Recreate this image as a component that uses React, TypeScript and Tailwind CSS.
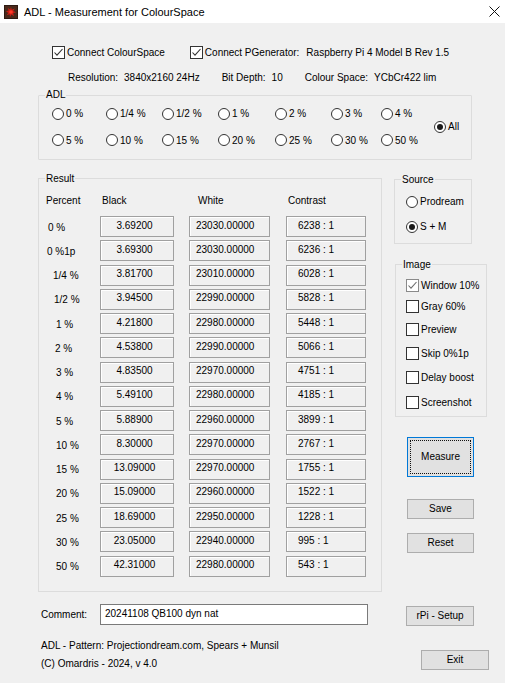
import React from "react";

const rows: { p: string; pad: string; b: string; w: string; c: string }[] = [
  { p: "0 %", pad: "pl-[2px]", b: "3.69200", w: "23030.00000", c: "6238 : 1" },
  { p: "0 %1p", pad: "pl-[1px]", b: "3.69300", w: "23030.00000", c: "6236 : 1" },
  { p: "1/4 %", pad: "pl-[7px]", b: "3.81700", w: "23010.00000", c: "6028 : 1" },
  { p: "1/2 %", pad: "pl-[8px]", b: "3.94500", w: "22990.00000", c: "5828 : 1" },
  { p: "1 %", pad: "pl-[10px]", b: "4.21800", w: "22980.00000", c: "5448 : 1" },
  { p: "2 %", pad: "pl-[9px]", b: "4.53800", w: "22990.00000", c: "5066 : 1" },
  { p: "3 %", pad: "pl-[10px]", b: "4.83500", w: "22970.00000", c: "4751 : 1" },
  { p: "4 %", pad: "pl-[10px]", b: "5.49100", w: "22980.00000", c: "4185 : 1" },
  { p: "5 %", pad: "pl-[10px]", b: "5.88900", w: "22960.00000", c: "3899 : 1" },
  { p: "10 %", pad: "pl-[10px]", b: "8.30000", w: "22970.00000", c: "2767 : 1" },
  { p: "15 %", pad: "pl-[10px]", b: "13.09000", w: "22970.00000", c: "1755 : 1" },
  { p: "20 %", pad: "pl-[10px]", b: "15.09000", w: "22960.00000", c: "1522 : 1" },
  { p: "25 %", pad: "pl-[10px]", b: "18.69000", w: "22950.00000", c: "1228 : 1" },
  { p: "30 %", pad: "pl-[10px]", b: "23.05000", w: "22940.00000", c: "995 : 1" },
  { p: "50 %", pad: "pl-[10px]", b: "42.31000", w: "22980.00000", c: "543 : 1" },
];

const adlRow1 = ["0 %", "1/4 %", "1/2 %", "1 %", "2 %", "3 %", "4 %"];
const adlRow2 = ["5 %", "10 %", "15 %", "20 %", "25 %", "30 %", "50 %"];

function Radio({ checked = false, label }: { checked?: boolean; label: string }) {
  return (
    <div className="flex items-center h-[13px] gap-[2px] whitespace-nowrap">
      <span className="w-[12px] h-[12px] shrink-0 rounded-full border border-[#333333] bg-white flex items-center justify-center">
        {checked && <span className="w-[6px] h-[6px] rounded-full bg-[#1a1a1a]" />}
      </span>
      <span className="leading-[13px]">{label}</span>
    </div>
  );
}

function Check({ checked = false, label, dim = false }: { checked?: boolean; label: string; dim?: boolean }) {
  return (
    <div className="flex items-center h-[13px] gap-[2px] whitespace-nowrap">
      <span
        className={
          dim
            ? "w-[13px] h-[13px] shrink-0 border border-[#8a8a8a] bg-white flex items-center justify-center"
            : "w-[13px] h-[13px] shrink-0 border border-[#333333] bg-white flex items-center justify-center"
        }
      >
        {checked && (
          <svg width="11" height="11" viewBox="0 0 11 11">
            <polyline
              points="1.5,5.5 4,8.2 9.5,2"
              fill="none"
              stroke={dim ? "#6e6e6e" : "#333333"}
              strokeWidth="1.1"
            />
          </svg>
        )}
      </span>
      <span className="leading-[13px]">{label}</span>
    </div>
  );
}

function Legend({ children }: { children: React.ReactNode }) {
  return <legend className="ml-[6px] px-[1px] leading-[12px]">{children}</legend>;
}

const boxCls =
  "h-[21px] border border-[#a0a0a0] shadow-[inset_1px_1px_0_#ffffff] flex items-center leading-[12px] pb-[2px]";

export default function App() {
  return (
    <div className="w-[505px] h-[683px] bg-[#f0f0f0] overflow-hidden font-['Liberation_Sans',Arial,sans-serif] text-[10px] text-black">
      {/* Title bar */}
      <div className="h-[23px] bg-white flex items-center pl-[4px] pr-[5px]">
        <svg width="14" height="14" viewBox="0 0 14 14" className="shrink-0">
          <rect x="0" y="0" width="14" height="14" fill="#2e1a12" />
          <rect x="1" y="1" width="12" height="12" fill="#4a2a1c" />
          <polygon
            points="7,2 7.8,4.8 10.8,3.4 9.2,6 12,7.3 9.2,8.3 10,11.2 7.4,9.6 6,12 5.6,9.3 2.6,10.2 4.3,7.9 2,6.2 4.6,5.6 3.8,3 6.1,4.4"
            fill="#c81e14"
          />
          <circle cx="7" cy="7" r="1.8" fill="#ff3a28" />
        </svg>
        <span className="ml-[6px] text-[11px] leading-[14px] text-[#000000]">
          ADL - Measurement for ColourSpace
        </span>
        <div className="flex-1" />
        <svg width="11" height="11" viewBox="0 0 11 11" className="mb-[1px]">
          <line x1="0.5" y1="0.5" x2="10.5" y2="10.5" stroke="#111" strokeWidth="1" />
          <line x1="10.5" y1="0.5" x2="0.5" y2="10.5" stroke="#111" strokeWidth="1" />
        </svg>
      </div>

      {/* Connect row */}
      <div className="mt-[23px] pl-[52px] flex items-center h-[13px] leading-[13px]">
        <Check checked label="Connect ColourSpace" />
        <div className="ml-[25px]">
          <Check checked label="Connect PGenerator:" />
        </div>
        <span className="ml-[7px]">Raspberry Pi 4 Model B Rev 1.5</span>
      </div>

      {/* Resolution row */}
      <div className="mt-[12px] pl-[68px] flex items-center h-[14px] leading-[14px] whitespace-nowrap">
        <span>Resolution:</span>
        <span className="ml-[6px]">3840x2160 24Hz</span>
        <span className="ml-[22px]">Bit Depth:</span>
        <span className="ml-[6px]">10</span>
        <span className="ml-[22px]">Colour Space:</span>
        <span className="ml-[6px]">YCbCr422 lim</span>
      </div>

      {/* ADL group */}
      <fieldset className="ml-[38px] mt-[4px] w-[434px] border border-[#dcdcdc] rounded-[1px]">
        <Legend>ADL</Legend>
        <div className="flex items-center pl-[13px] pt-[6px] pb-[12px]">
          <div className="grid grid-cols-[54px_56px_56px_57px_56px_50px_53px] gap-y-[13.5px]">
            {adlRow1.map((l) => (
              <Radio key={l} label={l} />
            ))}
            {adlRow2.map((l) => (
              <Radio key={l} label={l} />
            ))}
          </div>
          <Radio checked label="All" />
        </div>
      </fieldset>

      {/* Middle section */}
      <div className="flex items-start mt-[13px]">
        {/* Result group */}
        <fieldset className="ml-[38px] w-[344px] border border-[#dcdcdc]">
          <Legend>Result</Legend>
          <div className="pl-[7px] pt-[9px] pb-[14px]">
            <div className="flex h-[14px] leading-[14px] whitespace-nowrap">
              <span className="w-[54px]">Percent</span>
              <span className="w-[89px] pl-[2px]">Black</span>
              <span className="w-[97px] pl-[9px]">White</span>
              <span className="pl-[2px]">Contrast</span>
            </div>
            <div className="mt-[8.5px] flex flex-col gap-[3.25px]">
              {rows.map((r) => (
                <div key={r.p} className="flex items-center h-[21px] whitespace-nowrap">
                  <span className={"w-[54px] pt-[2px] leading-[12px] " + r.pad}>{r.p}</span>
                  <div className={boxCls + " w-[74px] justify-center pr-[5px]"}>{r.b}</div>
                  <div className={boxCls + " ml-[15px] w-[81px] pl-[6px]"}>{r.w}</div>
                  <div className={boxCls + " ml-[16px] w-[80px] pl-[11px]"}>{r.c}</div>
                </div>
              ))}
            </div>
          </div>
        </fieldset>

        {/* Right column */}
        <div className="flex flex-col mt-[1px]">
          <fieldset className="ml-[12px] w-[78px] border border-[#dcdcdc]">
            <Legend>Source</Legend>
            <div className="pl-[11px] pt-[9.5px] pb-[10px] flex flex-col gap-[12px]">
              <Radio label="Prodream" />
              <Radio checked label="S + M" />
            </div>
          </fieldset>

          <fieldset className="ml-[13px] mt-[14.5px] w-[92px] border border-[#dcdcdc]">
            <Legend>Image</Legend>
            <div className="pl-[10px] pt-[8px] pb-[7px] flex flex-col">
              <Check checked dim label="Window 10%" />
              <div className="mt-[8px]">
                <Check label="Gray 60%" />
              </div>
              <div className="mt-[10px]">
                <Check label="Preview" />
              </div>
              <div className="mt-[11px]">
                <Check label="Skip 0%1p" />
              </div>
              <div className="mt-[11px]">
                <Check label="Delay boost" />
              </div>
              <div className="mt-[12px]">
                <Check label="Screenshot" />
              </div>
            </div>
          </fieldset>

          <button className="ml-[25px] mt-[20px] w-[67px] h-[40px] bg-[#e1e1e1] border border-[#0078d7] p-[2px]">
            <div className="w-full h-full border border-dotted border-[#111] flex items-center justify-center leading-[12px]">
              Measure
            </div>
          </button>
          <button className="ml-[25px] mt-[22px] w-[67px] h-[20px] bg-[#e1e1e1] border border-[#adadad] flex items-center justify-center leading-[12px]">
            Save
          </button>
          <button className="ml-[25px] mt-[14px] w-[67px] h-[20px] bg-[#e1e1e1] border border-[#adadad] flex items-center justify-center leading-[12px]">
            Reset
          </button>
        </div>
      </div>

      {/* Comment row */}
      <div className="mt-[12px] flex items-center whitespace-nowrap">
        <span className="ml-[41px] w-[59px] pt-[1px] leading-[12px]">Comment:</span>
        <div className="w-[268px] h-[21px] bg-white border border-[#7a7a7a] pl-[4px] flex items-center pb-[2px] leading-[12px]">
          20241108 QB100 dyn nat
        </div>
        <button className="ml-[38px] mt-[2px] w-[68px] h-[20px] bg-[#e1e1e1] border border-[#adadad] flex items-center justify-center leading-[12px]">
          rPi - Setup
        </button>
      </div>

      {/* Footer */}
      <div className="mt-[13px] flex items-start whitespace-nowrap">
        <div className="ml-[41px] flex flex-col leading-[14px]">
          <span>ADL - Pattern: Projectiondream.com, Spears + Munsil</span>
          <span className="mt-[4px]">(C) Omardris - 2024, v 4.0</span>
        </div>
        <div className="flex-1" />
        <button className="mt-[11px] mr-[16px] w-[68px] h-[20px] bg-[#e1e1e1] border border-[#adadad] flex items-center justify-center leading-[12px]">
          Exit
        </button>
      </div>
    </div>
  );
}
